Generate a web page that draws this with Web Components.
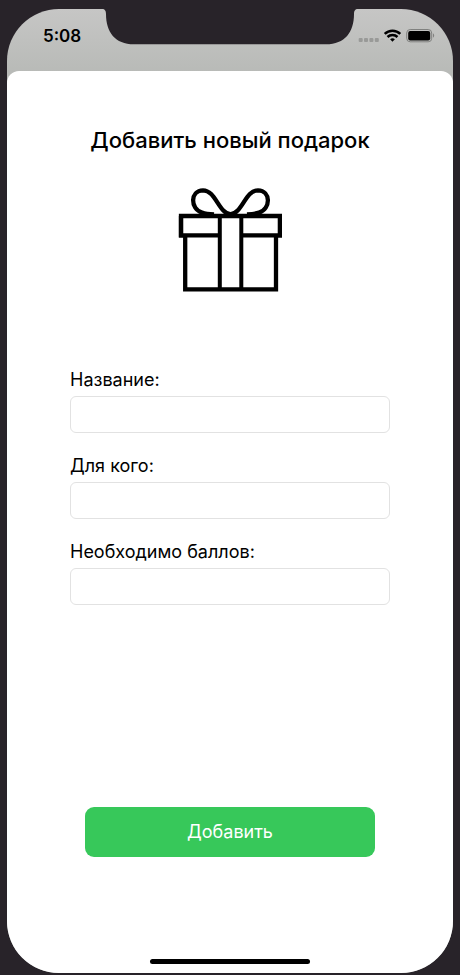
<!DOCTYPE html>
<html lang="ru">
<head>
<meta charset="utf-8">
<meta name="viewport" content="width=device-width, initial-scale=1">
<title>Добавить новый подарок</title>
<style>
  html, body { margin: 0; }
  body {
    background: #282329;
    color: #000;
    font-family: Inter, "Liberation Sans", sans-serif;
  }
</style>
</head>
<body>
<phone-frame>
  <status-bar time="5:08"></status-bar>
  <modal-sheet heading="Добавить новый подарок">
    <gift-icon slot="picture"></gift-icon>
    <text-field label="Название:" name="title"></text-field>
    <text-field label="Для кого:" name="recipient"></text-field>
    <text-field label="Необходимо баллов:" name="points" mode="numeric"></text-field>
    <primary-button slot="action">Добавить</primary-button>
  </modal-sheet>
</phone-frame>

<script>
  class BaseElement extends HTMLElement {
    constructor() {
      super();
      this.attachShadow({ mode: 'open' });
    }
    connectedCallback() {
      this.shadowRoot.innerHTML = this.render();
    }
  }

  class PhoneFrame extends BaseElement {
    render() {
      return `
        <style>
          :host { display: flex; box-sizing: border-box; min-height: 100vh; padding: 9px 7px 2px; }
          .screen {
            position: relative;
            flex: 1;
            display: flex;
            flex-direction: column;
            overflow: hidden;
            border-radius: 52px;
            background: linear-gradient(#c6c6c5, #b8bab7 64px);
          }
          .notch {
            position: absolute;
            top: 0;
            left: 50%;
            width: 256px;
            height: 36px;
            margin-left: -128px;
          }
        </style>
        <div class="screen">
          <slot></slot>
          <svg class="notch" viewBox="0 0 256 36" aria-hidden="true">
            <path fill="#282329" d="M0 -1V0C3 0 4 2 4 5C4 23 13 35.3 32 35.3H224C243 35.3 252 23 252 5C252 2 253 0 256 0V-1Z"/>
          </svg>
        </div>`;
    }
  }

  class StatusBar extends BaseElement {
    render() {
      return `
        <style>
          :host {
            display: flex;
            justify-content: space-between;
            align-items: center;
            box-sizing: border-box;
            height: 62px;
            padding: 0 18px 8px 36px;
          }
          time { font-size: 17px; line-height: 20px; font-weight: 600; }
          .icons { display: flex; align-items: center; }
          svg { display: block; }
        </style>
        <time>${this.getAttribute('time')}</time>
        <div class="icons">
          <svg width="77" height="16" viewBox="0 0 77 16" role="img" aria-label="Wi-Fi, заряд батареи">
            <g fill="#999a98">
              <rect x=".7" y="10" width="4" height="4" rx="1"/>
              <rect x="6" y="10" width="4" height="4" rx="1"/>
              <rect x="11.4" y="10" width="4" height="4" rx="1"/>
              <rect x="16.8" y="10" width="4" height="4" rx="1"/>
            </g>
            <g fill="none" stroke="#000" stroke-width="2.5">
              <path d="M26.7 5.8A11.2 11.2 0 0 1 42.3 5.8"/>
              <path d="M29.5 9A7.2 7.2 0 0 1 39.5 9"/>
            </g>
            <path d="M32.1 11.3A3.6 3.6 0 0 1 36.9 11.3L34.5 13.8Z"/>
            <rect x="48.7" y="1.5" width="25" height="12.3" rx="3.5" fill="none" stroke="#80817f"/>
            <rect x="50.2" y="3" width="22" height="9.5" rx="2"/>
            <path fill="#80817f" d="M75 5.3Q77.3 7.5 75 9.8Z"/>
          </svg>
        </div>`;
    }
  }

  class ModalSheet extends BaseElement {
    render() {
      return `
        <style>
          :host {
            flex: 1;
            display: flex;
            flex-direction: column;
            align-items: center;
            box-sizing: border-box;
            padding: 53px 24px 9px;
            border-radius: 12px 12px 0 0;
            background: #fff;
          }
          h1 { margin: 0; font-size: 22px; line-height: 32px; font-weight: 500; text-align: center; }
          .picture { margin-top: 32px; }
          form {
            flex: 1;
            display: flex;
            flex-direction: column;
            align-items: center;
            gap: 21px;
            width: 100%;
            margin-top: 76px;
          }
          .action { margin-top: auto; width: 100%; display: flex; justify-content: center; }
          .home { width: 160px; height: 5px; margin-top: 102px; border-radius: 3px; background: #000; }
        </style>
        <h1>${this.getAttribute('heading')}</h1>
        <div class="picture"><slot name="picture"></slot></div>
        <form>
          <slot></slot>
          <div class="action"><slot name="action"></slot></div>
        </form>
        <div class="home"></div>`;
    }
  }

  class GiftIcon extends BaseElement {
    render() {
      return `
        <style>
          :host { display: block; }
          svg { display: block; }
        </style>
        <svg width="104" height="104" viewBox="178 188 104 104" fill="none" stroke="#000" stroke-width="4.3" role="img" aria-label="Подарок">
          <path d="M219 235.4H181V216H280V235.4H242"/>
          <path d="M181 237.5V216M280 237.5V216"/>
          <path d="M185.2 235.5V289.4H276V235.5"/>
          <path d="M219.8 216V289.5M241.3 216V289.5" stroke-width="4"/>
          <path d="M231 214.5C218 213 216 190.5 203 190.3C190 190.5 190 209 202 212.5Q206 214 214 214.5"/>
          <path d="M230 214.5C243 213 245 190.5 258 190.3C271 190.5 271 209 259 212.5Q255 214 247 214.5"/>
        </svg>`;
    }
  }

  class TextField extends BaseElement {
    render() {
      return `
        <style>
          :host { display: flex; flex-direction: column; gap: 4px; width: 100%; max-width: 320px; }
          label { font-size: 18px; line-height: 24px; }
          input {
            box-sizing: border-box;
            width: 100%;
            height: 37px;
            padding: 0 8px;
            border: 1px solid #e2e2e2;
            border-radius: 6px;
            background: #fff;
            color: inherit;
            font: inherit;
            font-size: 18px;
          }
        </style>
        <label for="field">${this.getAttribute('label')}</label>
        <input id="field" type="text" name="${this.getAttribute('name')}" inputmode="${this.getAttribute('mode') || 'text'}">`;
    }
  }

  class PrimaryButton extends BaseElement {
    render() {
      return `
        <style>
          :host { display: block; width: 100%; max-width: 290px; }
          button {
            display: block;
            width: 100%;
            padding: 13px 16px;
            border: 0;
            border-radius: 9px;
            background: #37c85a;
            color: #fff;
            font: inherit;
            font-size: 18px;
            line-height: 24px;
          }
        </style>
        <button type="button"><slot></slot></button>`;
    }
  }

  customElements.define('phone-frame', PhoneFrame);
  customElements.define('status-bar', StatusBar);
  customElements.define('modal-sheet', ModalSheet);
  customElements.define('gift-icon', GiftIcon);
  customElements.define('text-field', TextField);
  customElements.define('primary-button', PrimaryButton);
</script>
</body>
</html>
